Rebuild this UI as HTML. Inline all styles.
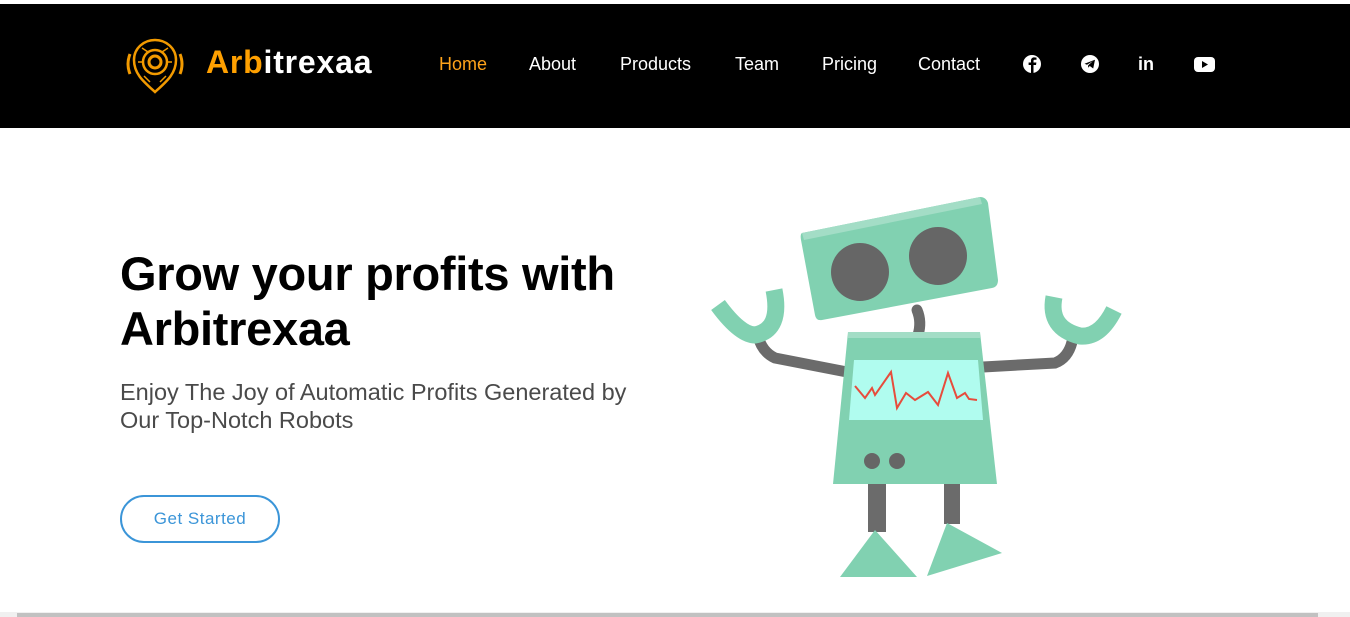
<!DOCTYPE html>
<html><head><meta charset="utf-8"><style>
*{margin:0;padding:0;box-sizing:border-box}
body{width:1350px;height:617px;overflow:hidden;background:#fff;font-family:"Liberation Sans",sans-serif;position:relative}
.hdr{position:absolute;left:0;top:4px;width:1350px;height:124px;background:#000}
.logo{position:absolute;left:206px;top:44px;font-size:32px;font-weight:bold;color:#fff;letter-spacing:0.8px}
.logo span{color:#ffa000}
.nav a{position:absolute;top:54px;color:#fff;font-size:18px;text-decoration:none}
h1{position:absolute;left:120px;top:246px;font-size:47px;line-height:55px;font-weight:bold;color:#000;width:560px;letter-spacing:-0.3px}
.sub{position:absolute;left:120px;top:378px;font-size:23.5px;line-height:28px;color:#4a4a4a;width:540px}
.btn{position:absolute;left:120px;top:495px;width:160px;height:48px;border:2px solid #3b95d8;border-radius:24px;color:#3b95d8;font-size:17px;text-align:center;line-height:44px;letter-spacing:.5px}
.sb{position:absolute;left:0;top:612px;width:1350px;height:5px;background:#f0f0f0}
.sb div{position:absolute;left:17px;top:1px;width:1301px;height:4px;background:#c1c1c1}
</style></head><body>
<div class="hdr"></div>
<svg style="position:absolute;left:124px;top:36px" width="62" height="62" viewBox="0 0 62 62">
<g fill="none" stroke="#f29a00" stroke-width="2.5">
<path d="M31 56 C20 46 10 38 10 24 C10 12 20 4 31 4 C42 4 52 12 52 24 C52 38 42 46 31 56Z"/>
<circle cx="31" cy="26" r="12"/><circle cx="31" cy="26" r="6" stroke-width="3"/>
<path d="M6 18 Q2 28 6 38 M56 18 Q60 28 56 38" stroke-width="3"/>
<path d="M18 12 L24 16 M44 12 L38 16 M20 40 L26 46 M42 40 L36 46 M14 26 L18 26 M48 26 L44 26" stroke-width="1.5"/>
</g></svg>
<div class="logo"><span>Arb</span>itrexaa</div>
<div class="nav">
<a style="left:439px;color:#ffa31a">Home</a>
<a style="left:529px">About</a>
<a style="left:620px">Products</a>
<a style="left:735px">Team</a>
<a style="left:822px">Pricing</a>
<a style="left:918px">Contact</a>
</div>
<svg style="position:absolute;left:1020px;top:52px" width="200" height="24" viewBox="0 0 200 24">
<circle cx="12" cy="12" r="9" fill="#fff"/><path d="M13.5 21 V13 H16 L16.4 10.5 H13.5 V9 C13.5 8.2 13.9 7.8 14.7 7.8 H16.5 V5.6 C15.8 5.5 15 5.4 14.2 5.4 C12.2 5.4 11 6.6 11 8.7 V10.5 H8.6 V13 H11 V21Z" fill="#000"/>
<circle cx="70" cy="12" r="9" fill="#fff"/><path d="M64.5 11.8 L75 7.8 L73.2 16.5 L69.8 14 L68 15.8 L68.2 13.2 L73 9 L67 12.8Z" fill="#000"/>
<text x="118" y="18" fill="#fff" font-size="18" font-weight="bold" font-family="Liberation Sans">in</text>
<rect x="174" y="5" width="21" height="15" rx="4" fill="#fff"/><path d="M182 9 L188 12.5 L182 16Z" fill="#000"/>
</svg>
<h1>Grow your profits with Arbitrexaa</h1>
<div class="sub">Enjoy The Joy of Automatic Profits Generated by Our Top-Notch Robots</div>
<div class="btn">Get Started</div>
<svg style="position:absolute;left:0;top:0" width="1350" height="617">
<g stroke="#6b6b6b" stroke-width="11" fill="none" stroke-linecap="round">
<path d="M917 310 Q922 322 918 335"/>
<path d="M847 372 L775 358 Q762 352 758 336"/>
<path d="M983 367 L1055 363 Q1068 358 1072 342"/>
</g>
<rect x="868" y="480" width="18" height="52" fill="#6b6b6b"/>
<rect x="944" y="480" width="16" height="44" fill="#6b6b6b"/>
<path d="M802 233 L980 197 Q986 197 988 203 L998 280 Q998 287 992 288 L822 320 Q816 321 815 315 L801 240 Q800 234 802 233Z" fill="#81d1b1"/>
<path d="M802 233 L980 197 L982 204 L804 240Z" fill="#a3ddc6"/>
<circle cx="860" cy="272" r="29" fill="#666"/><circle cx="938" cy="256" r="29" fill="#666"/>
<path d="M848 332 L980 332 L997 484 L833 484Z" fill="#81d1b1"/>
<path d="M848 332 L980 332 L980 338 L848 338Z" fill="#a3ddc6"/>
<path d="M854 360 L978 360 L983 420 L849 420Z" fill="#b0fcef"/>
<polyline points="855,386 865,398 872,388 875,395 891,372 897,408 906,393 915,400 928,392 938,405 948,373 957,398 965,393 969,399 977,400" fill="none" stroke="#e74c3c" stroke-width="2"/>
<circle cx="872" cy="461" r="8" fill="#666"/><circle cx="897" cy="461" r="8" fill="#666"/>
<path d="M875 530 L917 577 L840 577Z" fill="#81d1b1"/>
<path d="M947 523 L1002 553 L927 576Z" fill="#81d1b1"/>
<g fill="none" stroke="#81d1b1" stroke-width="17">
<path d="M718 305 Q740 335 755 335 Q782 330 774 290"/>
<path d="M1054 297 Q1048 328 1080 336 Q1100 338 1114 310"/>
</g>
</svg>
<div class="sb"><div></div></div>
</body></html>
